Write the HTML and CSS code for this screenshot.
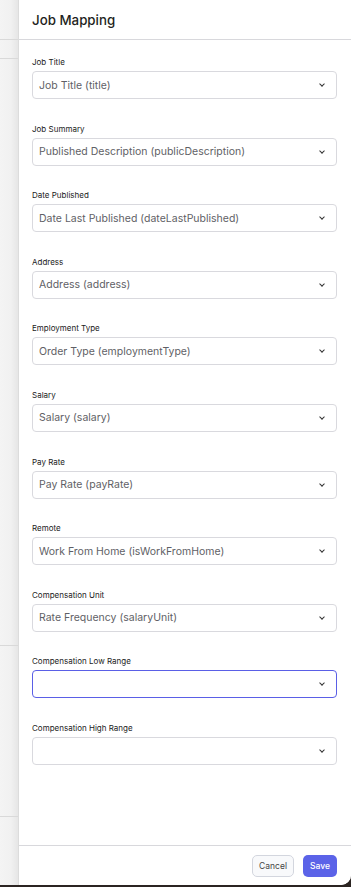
FILE: index.html
```html
<!DOCTYPE html>
<html lang="en">
<head>
  <meta charset="UTF-8" />
  <title>Job Mapping</title>
  <link rel="stylesheet" href="styles.css">
</head>
<body>
  <div class="window">
    <!-- page behind the drawer -->
    <div class="backdrop">
      <div class="bg-row bg-head"></div>
      <div class="bg-row bg-sub"></div>
      <div class="bg-row bg-list"></div>
      <div class="bg-row bg-foot"></div>
    </div>

    <div class="drawer">
      <div class="drawer-header">
        <h2>Job Mapping</h2>
      </div>

      <div class="drawer-body">
        <div class="field">
          <label>Job Title</label>
          <div class="select"><span>Job Title (title)</span><i class="chev"></i></div>
        </div>
        <div class="field">
          <label>Job Summary</label>
          <div class="select"><span>Published Description (publicDescription)</span><i class="chev"></i></div>
        </div>
        <div class="field">
          <label>Date Published</label>
          <div class="select"><span>Date Last Published (dateLastPublished)</span><i class="chev"></i></div>
        </div>
        <div class="field">
          <label>Address</label>
          <div class="select"><span>Address (address)</span><i class="chev"></i></div>
        </div>
        <div class="field">
          <label>Employment Type</label>
          <div class="select"><span>Order Type (employmentType)</span><i class="chev"></i></div>
        </div>
        <div class="field">
          <label>Salary</label>
          <div class="select"><span>Salary (salary)</span><i class="chev"></i></div>
        </div>
        <div class="field">
          <label>Pay Rate</label>
          <div class="select"><span>Pay Rate (payRate)</span><i class="chev"></i></div>
        </div>
        <div class="field">
          <label>Remote</label>
          <div class="select"><span>Work From Home (isWorkFromHome)</span><i class="chev"></i></div>
        </div>
        <div class="field">
          <label>Compensation Unit</label>
          <div class="select"><span>Rate Frequency (salaryUnit)</span><i class="chev"></i></div>
        </div>
        <div class="field">
          <label>Compensation Low Range</label>
          <div class="select focused"><span></span><i class="chev"></i></div>
        </div>
        <div class="field">
          <label>Compensation High Range</label>
          <div class="select"><span></span><i class="chev"></i></div>
        </div>
      </div>

      <div class="drawer-footer">
        <button type="button" class="btn btn-cancel">Cancel</button>
        <button type="button" class="btn btn-save">Save</button>
      </div>
    </div>
  </div>
</body>
</html>
```

FILE: styles.css
```css
html, body { margin: 0; padding: 0; }
body {
  font-family: Inter, "Noto Sans", sans-serif;
  background: #2b2422;
  width: 351px;
  height: 887px;
  overflow: hidden;
}
.window {
  display: flex;
  height: 885px;
  background: #fff;
  border-bottom-right-radius: 10px;
  overflow: hidden;
}

/* page behind */
.backdrop {
  width: 18px;
  flex-shrink: 0;
  display: flex;
  flex-direction: column;
  background: linear-gradient(to right, #f4f4f4 0%, #f1f1f1 60%, #e6e6e6 100%);
}
.bg-row { border-bottom: 1px solid #d9d9d9; }
.bg-head { height: 39px; }
.bg-sub { height: 18px; }
.bg-list { height: 586px; }
.bg-foot { height: 170px; }

/* drawer */
.drawer {
  flex: 1;
  display: flex;
  flex-direction: column;
  border-left: 1px solid #dcdcdc;
  background: #fff;
  min-width: 0;
}
.drawer-header {
  height: 39px;
  border-bottom: 1px solid #d8d8dc;
  display: flex;
  align-items: center;
  padding-left: 13px;
}
.drawer-header h2 {
  margin: 0;
  font-size: 13.3px;
  font-weight: 500;
  color: #1f1f22;
}
.drawer-body {
  flex: 1;
  padding: 17px 14px 0 13px;
}
.field { margin-bottom: 24.6px; }
.field label {
  display: block;
  font-size: 8px;
  line-height: 10px;
  color: #222;
  margin-bottom: 4px;
}
.select {
  height: 28px;
  box-sizing: border-box;
  border: 1px solid #d9d9de;
  border-radius: 4px;
  display: flex;
  align-items: center;
  justify-content: space-between;
  padding: 0 12px 0 6px;
  font-size: 10.5px;
  color: #5f5f66;
}
.select.focused { border-color: #5a5fe6; }
.chev {
  width: 3px;
  height: 3px;
  border-right: 1.6px solid #333;
  border-bottom: 1.6px solid #333;
  transform: rotate(45deg);
  margin-top: -2px;
}

.drawer-footer {
  height: 40px;
  box-sizing: border-box;
  border-top: 1px solid #d8d8dc;
  display: flex;
  justify-content: flex-end;
  align-items: flex-start;
  gap: 9px;
  padding: 9px 14px 0 0;
}
.btn {
  font-family: Inter, "Noto Sans", sans-serif;
  font-size: 8.5px;
  height: 22px;
  border-radius: 5px;
  padding: 0;
  cursor: pointer;
}
.btn-cancel {
  width: 42px;
  background: #f8f9fb;
  border: 1px solid #d3d6de;
  color: #444;
}
.btn-save {
  width: 34px;
  background: #5b63e8;
  border: none;
  color: #fff;
  font-weight: 500;
}
```
